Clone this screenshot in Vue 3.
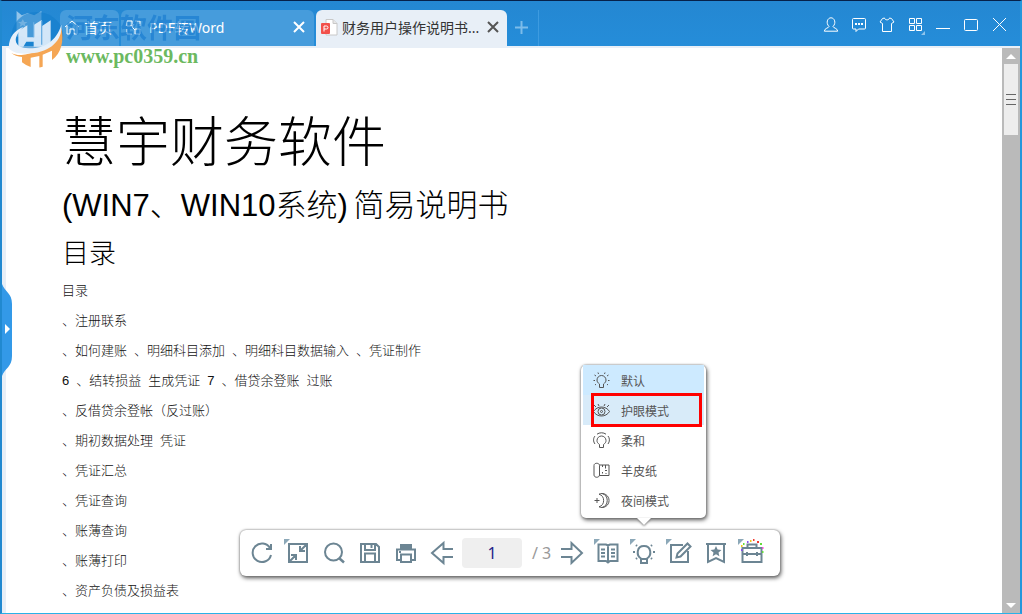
<script setup>
import { ref } from 'vue'

const page = ref('1')
const mode = ref('护眼模式')

const lines = [
  ['目录'],
  ['、注册联系'],
  ['、如何建账', '、明细科目添加', '、明细科目数据输入', '、凭证制作'],
  ['6', '、结转损益', '生成凭证', '7', '、借贷余登账', '过账'],
  ['、反借贷余登帐（反过账）'],
  ['、期初数据处理', '凭证'],
  ['、凭证汇总'],
  ['、凭证查询'],
  ['、账薄查询'],
  ['、账薄打印'],
  ['、资产负债及损益表']
]

const modes = [
  { name: '默认', d: 'M6.500 12C4.800 10.800 4 9.700 4 8a4.500 4.500 0 0 1 9 0c0 1.700-.8 2.800-2.500 4v3.500h-4zM.5 8.500h1.500M15 8.500h1.500M1.500 3l1.500 1M15.500 3l-1.500 1M5 .5l.5 1.500M12 .5l-.5 1.500M2 13l1-.8M15 13l-1-.8' },
  { name: '护眼模式', d: 'M.5 9.500C4 3.500 13 3.500 16.500 9.500 13 15.500 4 15.500 .5 9.500zM12 9.500a3.500 3.500 0 1 1-7 0a3.500 3.500 0 1 1 7 0M9.500 9.500a1 1 0 1 1-2 0a1 1 0 1 1 2 0M1 3l2 2M5 2l1 2M12 2l-1 2M16 3l-2 2' },
  { name: '柔和', d: 'M6.500 12.500C4.800 11.300 4 10.200 4 8.500a4.500 4.500 0 0 1 9 0c0 1.700-.8 2.800-2.500 4v3h-4zM2 12C0 9.500 .2 6 2 4M15 12c2-2.500 1.800-6 0-8M4 2.200c2.500-1.900 6.500-1.900 9 0' },
  { name: '羊皮纸', d: 'M1 3.500c0-3 5.500-3 5.500 0v9.500c0 3-5.500 3-5.500 0zM6.500 3h9.500v10.500h-9.500M9.500 3v2M12.500 3v3.500M12 8.500h2M9.500 10v1.500M13 11v1' },
  { name: '夜间模式', d: 'M6 2.200A7 7 0 1 1 6 14.800M6 2.200A6.600 6.600 0 0 1 6 14.800M9 1.500a7.300 7.300 0 0 1 0 14M4 6v5M1.500 8.500h5' }
]
</script>

<template>
  <div class="window">
    <header class="titlebar">
      <svg class="app-logo" viewBox="0 0 26 28" aria-hidden="true">
        <path d="M1 0l5 4 6-2 6 2 7-4v23l-7 2-6 3-6-4-5 1z" fill="#fff" fill-opacity=".5" />
        <path d="M7 8l1.500 2.500h3l-2.500 2 1 3-3-2-3 2 1-3-2.500-2h3z" fill="#fff" />
      </svg>
      <nav class="tabs">
        <div class="tab home">
          <svg width="16" height="15" viewBox="0 0 16 15"><path d="M1 7l7-6 7 6M3 6v8h3v-5h4v5h3V6" /></svg>
          <button>首页</button>
        </div>
        <div class="tab word">
          <svg width="15" height="15" viewBox="0 0 15 15"><path d="M1 1h5v5H1zM9 1h5v5M9 9h5v5H9zM1 9v5h5M6 7l3 3M8 4l-2 3" /></svg>
          <button>PDF转Word</button>
          <button class="close" aria-label="关闭 PDF转Word"><svg width="12" height="12" viewBox="0 0 12 12"><path d="M1 1l10 10M11 1L1 11" /></svg></button>
        </div>
        <div class="tab active">
          <svg class="file" width="17" height="17" viewBox="0 0 17 17">
            <path d="M5 .5h7l4 4v11.500H5z" fill="#fff" stroke="#c8c8c8" /><path d="M12 .5v4h4" fill="#e6e6e6" stroke="#c8c8c8" />
            <rect y="4" width="9" height="11" rx="1" fill="#f2504b" stroke="none" /><path d="M3 12.500V7h2.500a1.500 1.500 0 0 1 0 3H3" fill="none" stroke="#fff" />
          </svg>
          <button>财务用户操作说明书...</button>
          <button class="close" aria-label="关闭文档"><svg width="12" height="12" viewBox="0 0 12 12"><path d="M1 1l10 10M11 1L1 11" /></svg></button>
        </div>
        <button class="add" aria-label="新建标签"><svg width="13" height="13" viewBox="0 0 13 13"><path d="M6.500 0v13M0 6.500h13" /></svg></button>
      </nav>
      <div class="actions">
        <button aria-label="用户"><svg viewBox="0 0 16 16"><path d="M6 9.500C2.500 6 4.500.8 8 .8S13.500 6 10 9.500c0 1.500 4.500 1.500 4.700 4.700H1.300C1.500 11 6 11 6 9.500z" /></svg></button>
        <button aria-label="消息"><svg viewBox="0 0 16 16"><path d="M2.500 1.500h11q1 0 1 1v8.500q0 1-1 1H7.500L5 14.500V12H2.500q-1 0-1-1V2.500q0-1 1-1z" /><path d="M4 7h2M7 7h2M10 7h2" stroke-width="2" /></svg></button>
        <button aria-label="皮肤"><svg viewBox="0 0 16 16"><path d="M5.500 1C6 3.500 10 3.500 10.500 1l2 .5L15 5l-2.500 1.500V14.500h-9V6.500L1 5l2.500-3.500z" /></svg></button>
        <button aria-label="菜单"><svg viewBox="0 0 16 16"><path d="M2.500 1.500h5v5h-5zM9.500 1.500h5v5h-5zM2.500 8.500h5v5h-5zM9.500 8.500h5v5h-5z" /></svg><i class="corner"></i></button>
        <button aria-label="最小化"><svg viewBox="0 0 16 16"><path d="M1 11.500h14" /></svg></button>
        <button aria-label="最大化"><svg viewBox="0 0 16 16"><rect x="1.500" y="2.500" width="13" height="11" rx="1" /></svg></button>
        <button aria-label="关闭"><svg viewBox="0 0 16 16"><path d="M2 1l13 13M15 1L2 14" /></svg></button>
      </div>
    </header>

    <div class="body">
      <main class="document">
        <h1>慧宇财务软件</h1>
        <h2>(WIN7、WIN10系统) <span>简易说明书</span></h2>
        <h3>目录</h3>
        <p v-for="(line, i) in lines" :key="i"><span v-for="(part, j) in line" :key="j">{{ part }}</span></p>
      </main>
      <div class="scrollbar">
        <button aria-label="向上滚动"><i class="up"></i></button>
        <div class="thumb"><i></i><i></i><i></i></div>
        <button class="end" aria-label="向下滚动"><i class="down"></i></button>
      </div>
    </div>

    <button class="handle" aria-label="展开侧栏">
      <svg width="10" height="92" viewBox="0 0 10 92"><path d="M0 0C3 8 10 9 10 20v52C10 83 3 84 0 92z" fill="#3399e8" /><path d="M3 40l5 5-5 5z" fill="#fff" /></svg>
    </button>

    <div class="dock">
      <div class="toolbar">
        <button aria-label="旋转"><svg viewBox="0 0 24 24"><path d="M20 7A9.300 9.300 0 1 0 21 14M21 3v5h-5" /></svg></button>
        <button class="more" aria-label="适合窗口"><svg viewBox="0 0 24 24"><path d="M3 3h18v18H3zM20 4l-6 6M14 5v5h5M4 20l6-6M5 14h5v5" /></svg></button>
        <button aria-label="搜索"><svg viewBox="0 0 24 24"><circle cx="11.500" cy="11" r="8.500" /><path d="M17 17l5 4.500" stroke-width="2.500" /></svg></button>
        <button aria-label="保存"><svg viewBox="0 0 24 24"><path d="M3 3h15l3 3v15H3zM7 3v6h10V3M13.500 4v3M7 21v-8.500h10V21" /></svg></button>
        <button aria-label="打印"><svg viewBox="0 0 24 24"><path d="M6 3h12v5H6z" fill="#6c8593" stroke="none" /><path d="M7 19H3V8.500h18V19h-4M7 13.500h10V21H7zM5 11h2" /></svg></button>
        <button aria-label="上一页"><svg viewBox="0 0 24 24"><path d="M23 8h-9.500V2L2 12l11.500 10v-6H23" /></svg></button>
        <label class="pager"><input v-model="page" aria-label="页码"><span>/ 3</span></label>
        <button aria-label="下一页"><svg viewBox="0 0 24 24"><path d="M1 8h10.500V2L22 12 11.500 22v-6H1" /></svg></button>
        <button class="more" aria-label="阅读"><svg viewBox="0 0 24 24"><path d="M12 4v18M2.500 3.500H10l2 1 2-1h7.500V20H14l-2 1.500-2-1.500H2.500zM5 8.500h4M5 12h4M5 15.500h4M15 8.500h4M15 12h4M15 15.500h4" /></svg></button>
        <div class="lamp">
          <button class="more" aria-label="背景模式"><svg viewBox="0 0 24 24"><path d="M9 17.500C4 14.500 4.500 5 12 5s8 9.500 3 12.500V22H9zM9 18h6" /><path d="M1 11h2M21 11h2M4 4l1 1M20 4l-1 1M4 18l1-1M20 18l-1-1" /></svg></button>
          <div class="menu">
            <button v-for="m in modes" :key="m.name" :class="{ chosen: m.name === mode }" @click="mode = m.name">
              <svg width="17" height="17" viewBox="0 0 17 17"><path :d="m.d" /></svg>{{ m.name }}
            </button>
          </div>
        </div>
        <button class="more" aria-label="编辑"><svg viewBox="0 0 24 24"><path d="M15 4H3v17h17V10M8.500 16.500l1-4L19.500 2.500l3 3-10 10z" /></svg></button>
        <button aria-label="书签"><svg viewBox="0 0 24 24"><path d="M2 3h20M4 3v18l8-4 8 4V3" /><path d="M12 5l1.600 3.500 3.900.4-3 2.600.9 3.800-3.400-2-3.400 2 .9-3.800-3-2.600 3.900-.4z" fill="#6c8593" stroke="none" /></svg></button>
        <button class="more" aria-label="工具箱"><svg viewBox="0 0 24 24"><path d="M2.500 7h19v14h-19zM7.500 7V3.500h9V7M2.500 13h19M7 11v4M17 11v4" />
          <path d="M7 1h1.500M1 9h1.500" stroke="#8a4df0" /><path d="M13-1h1.500M17 1h2" stroke="#f03b30" /><path d="M10 0h1.500M1 5h1.500" stroke="#f3c51d" /><path d="M20 3h2M3 3h1.500M22 11h1.500" stroke="#65dc3b" /><path d="M22 7h1.500" stroke="#ee4fd4" /></svg></button>
      </div>
    </div>

    <div class="watermark">
      <svg width="58" height="60" viewBox="12 25 174 180" aria-hidden="true">
        <path d="M30 135C15 60 75 20 130 38c45 16 62 55 49 88L110 150z" fill="#147dcb" fill-opacity=".6" />
        <path d="M28 157C55 170 70 160 105 153C150 141 168 120 178 82C187 120 178 158 150 178V150l-28 12v36q-9 3-10 2v-34l-26 5v28q-14-4-26-14v-16q-20-2-32-12z" fill="#f5a654" />
        <path d="M20 142C22 105 38 90 65 78C28 112 38 137 70 142C120 147 162 126 178 72C183 118 145 154 86 158C53 161 32 157 20 142z" fill="#e7f0fa" />
        <path d="M49 91l27-17v36h19V73l24-15v80H95v-15H73l-9 15H49zM119 77l27-18v72l-20 8h-7z" fill="#e2effb" fill-opacity=".92" />
        <path d="M95 65v45M119 60v72" stroke="#6aaee2" stroke-width="4" />
      </svg>
      <div><strong>河东软件园</strong><em>www.pc0359.cn</em></div>
    </div>
  </div>
</template>

<style>
html, body { margin: 0; background: #fff; }
</style>

<style scoped>
* { box-sizing: border-box; }
button { border: 0; padding: 0; margin: 0; background: none; font: inherit; color: inherit; cursor: pointer; }
svg { display: block; flex: none; overflow: visible; }

.window {
  position: relative; display: flex; flex-direction: column; height: 100vh; overflow: hidden;
  border-top: 1px solid #06214a; border-right: 2px solid #2497dc; border-bottom: 1px solid #29b2e8; border-left: 2px solid #2189d0;
  font-family: "Liberation Sans", "Noto Sans CJK SC", sans-serif;
}
.titlebar {
  flex: none; display: flex; align-items: flex-end; height: 47px; padding: 0 7px 0 12px;
  background: linear-gradient(#2487d2, #258dd9); border-bottom: 2px solid #e8eff7; color: #fff;
}
.app-logo { width: 30px; height: 29px; margin: 0 16px 6px 0; }
.tabs { display: flex; align-items: stretch; flex: 1; height: 36px; font-family: "Noto Sans", "Noto Sans CJK SC", sans-serif; font-size: 14px; }
.tab { display: flex; align-items: center; gap: 4px; margin-right: 2px; padding: 0 8px 2px 5px; border-radius: 6px 6px 0 0; background: #469cdc; white-space: nowrap; }
.tab svg { fill: none; stroke: #fff; }
.home { width: 59px; padding-left: 4px; padding-right: 4px; }
.word { width: 193px; gap: 8px; padding-right: 9px; }
.active { width: 191px; background: #e8eff7; color: #333; }
.tab .close { margin-left: auto; }
.tab .close svg { stroke-width: 2; }
.active .close svg { stroke: #555; }
.add { width: 30px; border-right: 1px solid #3d9be0; }
.add svg { margin: 0 auto 2px 6px; stroke: #7cbcea; stroke-width: 2; }
.actions { display: flex; padding-bottom: 7px; }
.actions button { position: relative; width: 28px; height: 28px; display: grid; place-items: center; }
.actions svg { width: 16px; height: 16px; fill: none; stroke: #fff; }
.corner { position: absolute; right: 4px; bottom: 4px; border: 2px solid; border-color: transparent #8fc4ec #8fc4ec transparent; }

.body { flex: 1; min-height: 0; display: flex; border-left: 4px solid #e8eff7; }
.document { flex: 1; min-width: 0; overflow: hidden; padding: 56px 0 0 56px; color: #111; font-weight: 300; }
h1, h2, h3, p { margin: 0; font-weight: 300; white-space: nowrap; color: #000; }
h1 { font-size: 54px; line-height: 78px; }
h2 { font-size: 31px; line-height: 48px; }
h2 span { margin-left: -3px; }
h3 { font-size: 27px; line-height: 48px; }
p { display: flex; gap: 7px; font-size: 13px; line-height: 30px; color: #111; }
h3 + p { margin-top: -2px; }

.scrollbar { flex: none; width: 18px; display: flex; flex-direction: column; align-items: center; background: #bababa; }
.scrollbar button { width: 18px; height: 16px; display: grid; place-items: center; }
.scrollbar .end { margin-top: auto; }
.up, .down { border: 5px solid transparent; }
.up { border-top: 0; border-bottom-color: #fff; }
.down { border-bottom: 0; border-top-color: #fff; }
.thumb { width: 14px; height: 71px; display: flex; flex-direction: column; align-items: center; justify-content: center; gap: 4px; background: #ededed; }
.thumb i { width: 10px; height: 1px; background: #666; }
.handle { position: absolute; left: 0; top: 283px; }

.dock { position: absolute; left: 0; right: 2px; bottom: 37px; display: flex; justify-content: center; }
.toolbar { display: flex; align-items: center; height: 46px; padding: 0 10px 0 4px; border-radius: 6px; background: #fff; box-shadow: 0 0 2px #777, 1px 2px 4px #555; }
.toolbar > button, .lamp > button { position: relative; width: 36px; height: 40px; display: grid; place-items: center; }
.toolbar > button svg, .lamp > button svg { width: 24px; height: 24px; fill: none; stroke: #6c8593; stroke-width: 2; }
.more::before { content: ""; position: absolute; left: 4px; top: 6px; border: 3px solid; border-color: #8ca8b8 transparent transparent #8ca8b8; }
.pager { display: flex; align-items: center; padding-left: 2px; font-family: "Noto Sans", sans-serif; font-size: 16px; color: #999; }
.pager input { width: 60px; height: 30px; border: 0; border-radius: 4px; padding: 0; background: #efefef; text-align: center; font: inherit; color: #25258a; }
.pager span { width: 32px; padding-left: 10px; white-space: nowrap; }

.lamp { position: relative; }
.menu {
  position: absolute; left: 50%; bottom: 55px; width: 125px; margin-left: -63px; padding: 0 2px 3px;
  border-radius: 5px; background: #fff; box-shadow: 0 0 2px #777, 1px 2px 4px #555; font-size: 12px; color: #555;
}
.menu::after { content: ""; position: absolute; left: 56px; top: 100%; border: 7px solid transparent; border-bottom: 0; border-top-color: #fff; filter: drop-shadow(0 1px 1px #777); }
.menu button { position: relative; display: flex; align-items: center; gap: 11px; width: 100%; height: 30px; padding-left: 10px; }
.menu svg { fill: none; stroke: #555; }
.menu button:first-child { background: #cdeaff; }
.menu .chosen { background: #d8ebf9; }
.menu .chosen::after { content: ""; position: absolute; inset: -2px 2px -2px 8px; border: 3px solid #f00; }

.watermark { position: absolute; left: 4px; top: 8px; display: flex; gap: 2px; pointer-events: none; }
.watermark strong, .watermark em { display: block; white-space: nowrap; }
.watermark strong { margin-top: 5px; font-size: 27px; line-height: 30px; font-weight: 700; color: #1379cf; opacity: .6; }
.watermark em { font: bold 20px/24px "Liberation Serif", serif; color: #6cb960; }
</style>
